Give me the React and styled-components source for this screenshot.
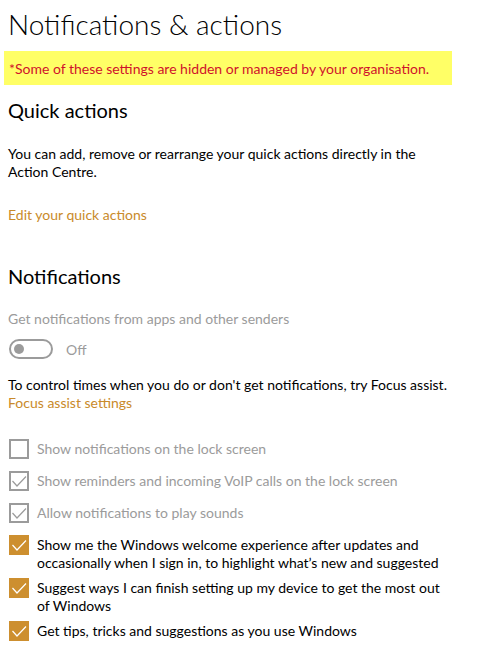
import React from 'react'
import styled, { createGlobalStyle } from 'styled-components'

const GlobalStyle = createGlobalStyle`
    body {
        margin: 0;
        background: #fff;
        font-family: Lato, "Noto Sans", sans-serif;
        color: #000;
    }
`

const Page = styled.div`
    padding: 0 8px;
    width: 488px;
    box-sizing: border-box;
`
const Title = styled.h1`
    margin: 0;
    padding-top: 7px;
    font-size: 28px;
    line-height: 34px;
    font-weight: 300;
`
const Banner = styled.div`
    margin: 10px 0 0 -4px;
    width: 448px;
    height: 34px;
    box-sizing: border-box;
    padding-left: 5px;
    display: flex;
    align-items: center;
    background: #ffff66;
    color: #d0112b;
    font-size: 14px;
`
const Heading = styled.h2`
    margin: ${p => p.$top}px 0 0;
    font-size: 20px;
    line-height: 26px;
    font-weight: 400;
`
const Text = styled.p`
    margin: ${p => p.$top || 0}px 0 0;
    font-size: 14px;
    line-height: 18px;
    color: ${p => (p.$muted ? '#9b9b9b' : '#000')};
`
const Link = styled.a`
    display: block;
    margin-top: ${p => p.$top || 0}px;
    font-size: 14px;
    line-height: 18px;
    color: #c98a2a;
    text-decoration: none;
`
const ToggleRow = styled.div`
    display: flex;
    align-items: center;
    gap: 13px;
    margin: 11px 0 0 1px;
`
const Track = styled.div`
    width: 44px;
    height: 20px;
    box-sizing: border-box;
    border: 2px solid #9b9b9b;
    border-radius: 10px;
    display: flex;
    align-items: center;
    padding-left: 3px;
`
const Knob = styled.span`
    width: 10px;
    height: 10px;
    border-radius: 50%;
    background: #9b9b9b;
`
const ToggleLabel = styled.span`
    font-size: 14px;
    color: #9b9b9b;
`
const CheckList = styled.div`
    margin-top: 27px;
`
const CheckRow = styled.div`
    display: flex;
    align-items: flex-start;
    gap: 8px;
    min-height: 32px;
    padding-left: 1px;
`
const Box = styled.span`
    flex: none;
    width: 20px;
    height: 20px;
    box-sizing: border-box;
    display: flex;
    align-items: center;
    justify-content: center;
    border: ${p => (p.$active ? 'none' : '2px solid #9b9b9b')};
    background: ${p => (p.$active ? '#cd8f2f' : 'transparent')};
`
const CheckText = styled.span`
    font-size: 14px;
    line-height: 18px;
    padding: 1px 0 6px;
    color: ${p => (p.$active ? '#000' : '#9b9b9b')};
`

function Check({ checked, active }) {
    return (
        <Box $active={active}>
            {checked && (
                <svg width="20" height="20" viewBox="0 0 20 20" style={{ margin: active ? 0 : -2 }}>
                    <path d="M3.5 10 L8 15 L17 5.5" fill="none" stroke={active ? '#fff' : '#9b9b9b'} strokeWidth="1.2" />
                </svg>
            )}
        </Box>
    )
}

const options = [
    { label: 'Show notifications on the lock screen', checked: false, active: false },
    { label: 'Show reminders and incoming VoIP calls on the lock screen', checked: true, active: false },
    { label: 'Allow notifications to play sounds', checked: true, active: false },
    { label: <>Show me the Windows welcome experience after updates and<br />occasionally when I sign in, to highlight what’s new and suggested</>, checked: true, active: true },
    { label: <>Suggest ways I can finish setting up my device to get the most out<br />of Windows</>, checked: true, active: true },
    { label: 'Get tips, tricks and suggestions as you use Windows', checked: true, active: true },
]

export default function App() {
    return (
        <>
            <GlobalStyle />
            <Page>
                <Title>Notifications &amp; actions</Title>
                <Banner>*Some of these settings are hidden or managed by your organisation.</Banner>
                <Heading $top={12}>Quick actions</Heading>
                <Text $top={22}>You can add, remove or rearrange your quick actions directly in the<br />Action Centre.</Text>
                <Link $top={25}>Edit your quick actions</Link>
                <Heading $top={39}>Notifications</Heading>
                <Text $top={21} $muted>Get notifications from apps and other senders</Text>
                <ToggleRow>
                    <Track><Knob /></Track>
                    <ToggleLabel>Off</ToggleLabel>
                </ToggleRow>
                <Text $top={17}>To control times when you do or don't get notifications, try Focus assist.</Text>
                <Link>Focus assist settings</Link>
                <CheckList>
                    {options.map((o, i) => (
                        <CheckRow key={i}>
                            <Check checked={o.checked} active={o.active} />
                            <CheckText $active={o.active}>{o.label}</CheckText>
                        </CheckRow>
                    ))}
                </CheckList>
            </Page>
        </>
    )
}
